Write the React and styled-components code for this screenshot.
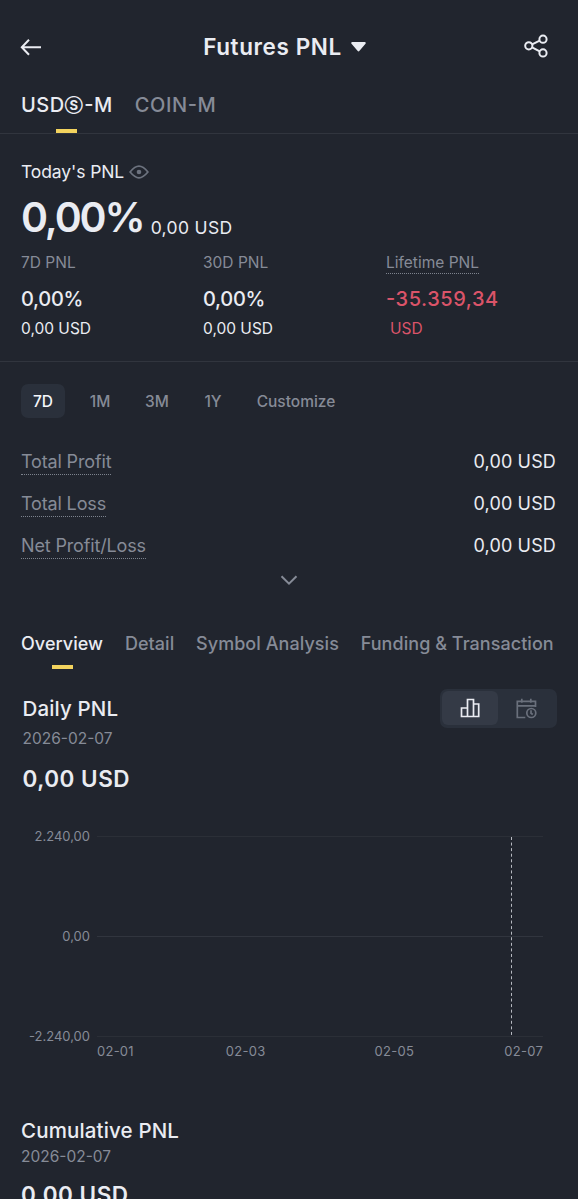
import React from "react";
import styled, { createGlobalStyle } from "styled-components";

const c = {
  bg: "#21252e",
  text: "#eaecf2",
  muted: "#868b97",
  line: "#31353e",
  grid: "#2b2f37",
  pill: "#2a303b",
  pillActive: "#343a46",
  accent: "#f3d35e",
  red: "#db5469",
};

const GlobalStyle = createGlobalStyle`
  html, body { margin: 0; background: ${c.bg}; }
  body { height: 1199px; overflow: hidden; }
  * { box-sizing: border-box; }
`;

const Screen = styled.main`
  width: 578px;
  height: 1199px;
  overflow: hidden;
  background: ${c.bg};
  color: ${c.text};
  font-family: Inter, "Liberation Sans", sans-serif;
  font-feature-settings: "case";
  display: flex;
  flex-direction: column;
`;

const Text = styled.span`
  display: block;
  white-space: nowrap;
  font-size: ${(p) => p.$size}px;
  font-weight: ${(p) => p.$weight || 400};
  line-height: ${(p) => p.$lh || 24}px;
  letter-spacing: ${(p) => p.$ls || 0}px;
  color: ${(p) => p.$color || c.text};
`;

const CoinMark = styled.span`
  font-size: 13px;
  font-weight: 700;
  line-height: 1;
  vertical-align: 2.4px;
  margin-right: 1px;
`;

const Header = styled.header`
  height: 87px;
  flex: none;
  padding: 7px 29px 0 20px;
  display: grid;
  grid-template-columns: 60px 1fr 60px;
  align-items: center;
  & > svg:last-child { justify-self: end; }
`;

const Title = styled.div`
  display: flex;
  align-items: center;
  justify-content: center;
  gap: 9px;
`;

const AccountTabs = styled.nav`
  height: 47px;
  flex: none;
  padding: 0 21px;
  display: flex;
  gap: 22px;
  border-bottom: 1px solid ${c.line};
`;

const Tab = styled.div`
  height: ${(p) => p.$height}px;
  padding-top: ${(p) => p.$top}px;
  display: flex;
  flex-direction: column;
  justify-content: space-between;
  align-items: center;
  &::after {
    content: "";
    width: 21px;
    height: 4px;
    background: ${(p) => (p.$active ? c.accent : "transparent")};
  }
`;

const Summary = styled.section`
  height: 228px;
  flex: none;
  padding: 26px 21px 0;
  border-bottom: 1px solid ${c.line};
`;

const TodayLabel = styled.div`
  display: flex;
  align-items: center;
  gap: 5px;
`;

const TodayValue = styled.div`
  display: flex;
  align-items: flex-end;
  gap: 7px;
  height: 67px;
`;

const Stats = styled.div`
  display: grid;
  grid-template-columns: 182px 183px 1fr;
`;

const Stat = styled.div`
  display: flex;
  flex-direction: column;
  align-items: flex-start;
`;

const StatLabel = styled.div`
  height: 23px;
  margin-bottom: 13px;
  border-bottom: 1px ${(p) => (p.$dotted ? "dotted #7d838e" : "solid transparent")};
`;

const StatUnit = styled.div`
  padding: 6px 0 0 ${(p) => p.$indent || 0}px;
`;

const Ranges = styled.div`
  display: flex;
  height: 56px;
  flex: none;
  padding: 22px 21px 0;
`;

const Range = styled.button`
  width: ${(p) => p.$width}px;
  height: 34px;
  margin-right: ${(p) => p.$gap}px;
  padding: 2px 0 0;
  border: 0;
  border-radius: 7px;
  display: flex;
  align-items: center;
  justify-content: center;
  font-family: inherit;
  background: ${(p) => (p.$active ? c.pill : "transparent")};
`;

const Totals = styled.div`
  padding: 30px 22px 0 21px;
`;

const TotalRow = styled.div`
  height: 42px;
  padding-top: 2px;
  display: flex;
  justify-content: space-between;
  align-items: flex-start;
`;

const Dotted = styled.div`
  height: 25px;
  border-bottom: 1px dotted #7d838e;
`;

const Expand = styled.div`
  height: 58px;
  flex: none;
  display: flex;
  justify-content: center;
  padding-top: 1px;
`;

const ReportTabs = styled.nav`
  display: flex;
  gap: 21.8px;
  padding: 0 21px;
  height: 57px;
  flex: none;
`;

const Panel = styled.section`
  padding: 0 21px 0 22.5px;
  height: 120px;
  flex: none;
  display: flex;
  justify-content: space-between;
`;

const Toggle = styled.div`
  width: 117px;
  height: 39px;
  padding: 2px 3px 3px 2px;
  border-radius: 7px;
  background: ${c.pill};
  display: flex;
`;

const ToggleItem = styled.div`
  width: 56px;
  height: 34px;
  border-radius: 6px;
  display: flex;
  align-items: center;
  justify-content: center;
  background: ${(p) => (p.$active ? c.pillActive : "transparent")};
`;

const Chart = styled.section`
  height: 308px;
  flex: none;
  padding: 19px 35px 0 21px;
  display: grid;
  grid-template-columns: 69px 1fr;
  grid-template-rows: 216px 20px;
  column-gap: 7px;
`;

const YAxis = styled.div`
  display: flex;
  flex-direction: column;
  justify-content: space-between;
  align-items: flex-end;
`;

const XAxis = styled.div`
  grid-column: 2;
  display: grid;
  grid-template-columns: 1fr 2fr 2fr 1fr;
  justify-items: center;
  & > :first-child { justify-self: start; }
  & > :last-child { justify-self: end; }
`;

const Cumulative = styled.section`
  padding: 0 21px;
`;

const SvgBox = styled.svg`
  display: block;
  flex: none;
  overflow: visible;
`;

const BackIcon = () => (
  <SvgBox width="22" height="18" viewBox="0 0 22 18" fill="none" stroke={c.text} strokeWidth="2">
    <path d="M21 9.300H2M9 1.800 1.800 9.300 9 16.800" />
  </SvgBox>
);

const ShareIcon = () => (
  <SvgBox width="25" height="26" viewBox="0 0 25 26" fill="none" stroke={c.text} strokeWidth="2">
    <circle cx="4.800" cy="11.800" r="3.600" />
    <circle cx="19" cy="5.200" r="3.600" />
    <circle cx="19" cy="18.900" r="3.600" />
    <path d="m8.100 10.300 7.600-3.600M8.100 13.400l7.600 3.900" />
  </SvgBox>
);

const EyeIcon = () => (
  <SvgBox width="20" height="14" viewBox="0 0 20 14" fill="none" stroke="#6c727e" strokeWidth="1.7">
    <path d="M1.100 7C4.200 3.200 7 1.200 10 1.200S15.800 3.200 18.900 7c-3.100 3.800-5.900 5.800-8.900 5.800S4.200 10.800 1.100 7Z" />
    <circle cx="10" cy="7" r="2.300" fill="#6c727e" stroke="none" />
  </SvgBox>
);

const BarsIcon = () => (
  <SvgBox width="20" height="20" viewBox="0 0 20 20" fill="none" stroke={c.text} strokeWidth="1.700">
    <path d="M1.500 10h6v8.500h-6zM7.500 1.500h6v17h-6zM13.500 6h5.200v12.500h-5.200z" />
  </SvgBox>
);

const CalendarIcon = () => (
  <SvgBox width="21" height="21" viewBox="0 0 21 21" fill="none" stroke="#6a707c" strokeWidth="1.700">
    <path d="M19.500 9V3.300H1.300v16.200h8M1.300 7.800h18.200M5.800 .8v4M14.800 .8v4" />
    <circle cx="15.300" cy="15" r="4.500" />
    <path d="M15 12.300v2.900l1.800 1.300" />
  </SvgBox>
);

const stats = [
  { label: "7D PNL", value: "0,00%", unit: "0,00 USD", ls: -0.3 },
  { label: "30D PNL", value: "0,00%", unit: "0,00 USD", ls: -0.3 },
  { label: "Lifetime PNL", value: "-35.359,34", unit: "USD", ls: 0.55, loss: true },
];

const ranges = [
  { label: "7D", width: 44, gap: 12, active: true },
  { label: "1M", width: 46, gap: 12 },
  { label: "3M", width: 44, gap: 12 },
  { label: "1Y", width: 44, gap: 10 },
  { label: "Customize", width: 102, gap: 0 },
];

const reports = [
  { label: "Overview", active: true },
  { label: "Detail" },
  { label: "Symbol Analysis" },
  { label: "Funding & Transaction" },
];

export default function App() {
  return (
    <>
      <GlobalStyle />
      <Screen>
        <Header>
          <BackIcon />
          <Title>
            <Text $size={22.5} $weight={600} $ls={0.6}>Futures PNL</Text>
            <SvgBox width="15" height="10" viewBox="0 0 15 10" fill={c.text}>
              <path d="M1.300 0h12.400c1 0 1.400 1 .8 1.700L8.500 8.800a1.300 1.300 0 0 1-2 0L.5 1.700C-.1 1 .3 0 1.300 0Z" />
            </SvgBox>
          </Title>
          <ShareIcon />
        </Header>

        <AccountTabs>
          <Tab $height={46} $top={6} $active>
            <Text $size={20} $weight={500} $ls={0.5}>USD<CoinMark>Ⓢ</CoinMark>-M</Text>
          </Tab>
          <Tab $height={46} $top={6}>
            <Text $size={20} $weight={500} $ls={0.6} $color={c.muted}>COIN-M</Text>
          </Tab>
        </AccountTabs>

        <Summary>
          <TodayLabel>
            <Text $size={17.5} $ls={-0.1}>Today's PNL</Text>
            <EyeIcon />
          </TodayLabel>
          <TodayValue>
            <Text $size={41} $weight={600} $lh={67} $ls={-2.1}>0,00%</Text>
            <Text $size={17.5} $ls={0.35} $lh={46}>0,00 USD</Text>
          </TodayValue>
          <Stats>
            {stats.map((s) => (
              <Stat key={s.label}>
                <StatLabel $dotted={s.loss}>
                  <Text $size={15.5} $color={c.muted}>{s.label}</Text>
                </StatLabel>
                <Text $size={20} $weight={500} $ls={s.ls} $color={s.loss && c.red}>{s.value}</Text>
                <StatUnit $indent={s.loss ? 4 : 0}>
                  <Text $size={15.5} $color={s.loss && c.red}>{s.unit}</Text>
                </StatUnit>
              </Stat>
            ))}
          </Stats>
        </Summary>

        <Ranges>
          {ranges.map((r) => (
            <Range key={r.label} $width={r.width} $gap={r.gap} $active={r.active}>
              <Text $size={15.5} $weight={500} $color={r.active ? "#f5f6fa" : c.muted}>{r.label}</Text>
            </Range>
          ))}
        </Ranges>

        <Totals>
          {["Total Profit", "Total Loss", "Net Profit/Loss"].map((label) => (
            <TotalRow key={label}>
              <Dotted>
                <Text $size={18} $ls={-0.15} $color={c.muted}>{label}</Text>
              </Dotted>
              <Text $size={18} $ls={0.15}>0,00 USD</Text>
            </TotalRow>
          ))}
        </Totals>
        <Expand>
          <SvgBox width="18" height="12" viewBox="0 0 18 12" fill="none" stroke={c.muted} strokeWidth="2">
            <path d="m1.500 1.200 7.500 7.500 7.500-7.500" />
          </SvgBox>
        </Expand>

        <ReportTabs>
          {reports.map((t) => (
            <Tab key={t.label} $height={37} $top={0} $active={t.active}>
              <Text $size={18} $weight={500} $ls={0.05} $color={!t.active && c.muted}>{t.label}</Text>
            </Tab>
          ))}
        </ReportTabs>

        <Panel>
          <div>
            <Text $size={20.5} $weight={500} $lh={39} $ls={0.15}>Daily PNL</Text>
            <Text $size={15.5} $lh={22} $color={c.muted}>2026-02-07</Text>
            <Text $size={22.5} $weight={600} $lh={57} $ls={0.5}>0,00 USD</Text>
          </div>
          <Toggle>
            <ToggleItem $active><BarsIcon /></ToggleItem>
            <ToggleItem><CalendarIcon /></ToggleItem>
          </Toggle>
        </Panel>

        <Chart>
          <YAxis>
            {["2.240,00", "0,00", "-2.240,00"].map((v) => (
              <Text key={v} $size={13} $lh={16} $color={c.muted}>{v}</Text>
            ))}
          </YAxis>
          <SvgBox width="446" height="216" viewBox="0 0 446 216" fill="none">
            <path d="M0 8.500h446M0 208.500h446" stroke={c.grid} />
            <path d="M0 108.500h446" stroke={c.line} />
            <path d="M414.500 9v198" stroke="#b6b9c0" strokeDasharray="3 2.570" />
          </SvgBox>
          <XAxis>
            {["02-01", "02-03", "02-05", "02-07"].map((d) => (
              <Text key={d} $size={13} $lh={15} $ls={0.25} $color={c.muted}>{d}</Text>
            ))}
          </XAxis>
        </Chart>

        <Cumulative>
          <Text $size={20.5} $weight={500} $lh={28} $ls={0.15}>Cumulative PNL</Text>
          <Text $size={15.5} $color={c.muted}>2026-02-07</Text>
          <Text $size={22.5} $weight={600} $lh={52} $ls={0.5}>0,00 USD</Text>
        </Cumulative>
      </Screen>
    </>
  );
}
